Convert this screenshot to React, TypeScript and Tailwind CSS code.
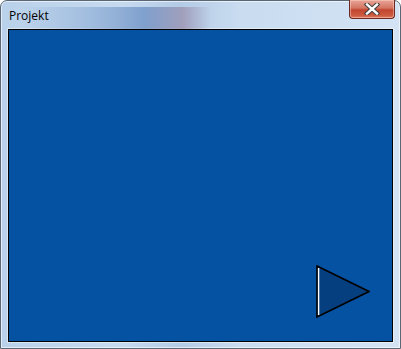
export default function App() {
  return (
    <div className="w-[401px] h-[349px] bg-white">
      <div
        className="relative flex flex-col w-[401px] h-[349px] rounded-t-[7px] border border-[#5a6775] bg-[linear-gradient(90deg,#b9d1ea_0%,#c6daef_30%,#b4cbe6_45%,#c9dcf0_60%,#d3e3f4_100%)] shadow-[inset_0_0_0_1px_rgba(255,255,255,0.6)]"
      >
        {/* title bar */}
        <div className="relative h-[28px] flex items-center pl-[8px]">
          <div className="absolute left-[20px] top-[6px] w-[190px] h-[22px] bg-[linear-gradient(90deg,rgba(110,150,200,0)_0%,rgba(100,140,195,0.35)_35%,rgba(85,125,185,0.6)_65%,rgba(150,135,165,0.65)_85%,rgba(110,150,200,0)_100%)]" />
          <span
            className="relative text-[12px] leading-none text-black pt-[1px]"
            style={{ fontFamily: '"Open Sans", "Noto Sans", sans-serif' }}
          >
            Projekt
          </span>
          <div className="absolute top-[-1px] right-[5px] w-[46px] h-[19px] rounded-b-[4px] border border-t-0 border-[#6b2a24] bg-[linear-gradient(180deg,#e8a598_0%,#d47563_45%,#c2452f_55%,#cc5a3f_85%,#e07a5e_100%)] shadow-[inset_0_0_0_1px_rgba(255,210,200,0.5)] flex items-center justify-center">
            <svg width="16" height="12" viewBox="0 0 16 12">
              <path
                d="M3 1.5 L13 10.5 M13 1.5 L3 10.5"
                stroke="#3d3d3d"
                strokeWidth="4.4"
                strokeLinecap="square"
              />
              <path
                d="M3 1.5 L13 10.5 M13 1.5 L3 10.5"
                stroke="#ffffff"
                strokeWidth="2.4"
                strokeLinecap="square"
              />
            </svg>
          </div>
        </div>

        {/* client area */}
        <div className="flex-1 flex px-[7px] pb-[6px]">
          <div className="flex-1 flex items-end justify-end pr-[22px] pb-[23px] border border-black bg-[#0552a2] shadow-[0_0_0_1px_rgba(255,255,255,0.45)]">
            <svg width="54" height="53" viewBox="0 0 54 53">
              <polygon
                points="1,1 53,26.5 1,52"
                fill="#063f80"
                stroke="#000000"
                strokeWidth="1.6"
              />
              <line x1="2.6" y1="3" x2="2.6" y2="50" stroke="#ffffff" strokeWidth="1.4" />
            </svg>
          </div>
        </div>
      </div>
    </div>
  );
}
